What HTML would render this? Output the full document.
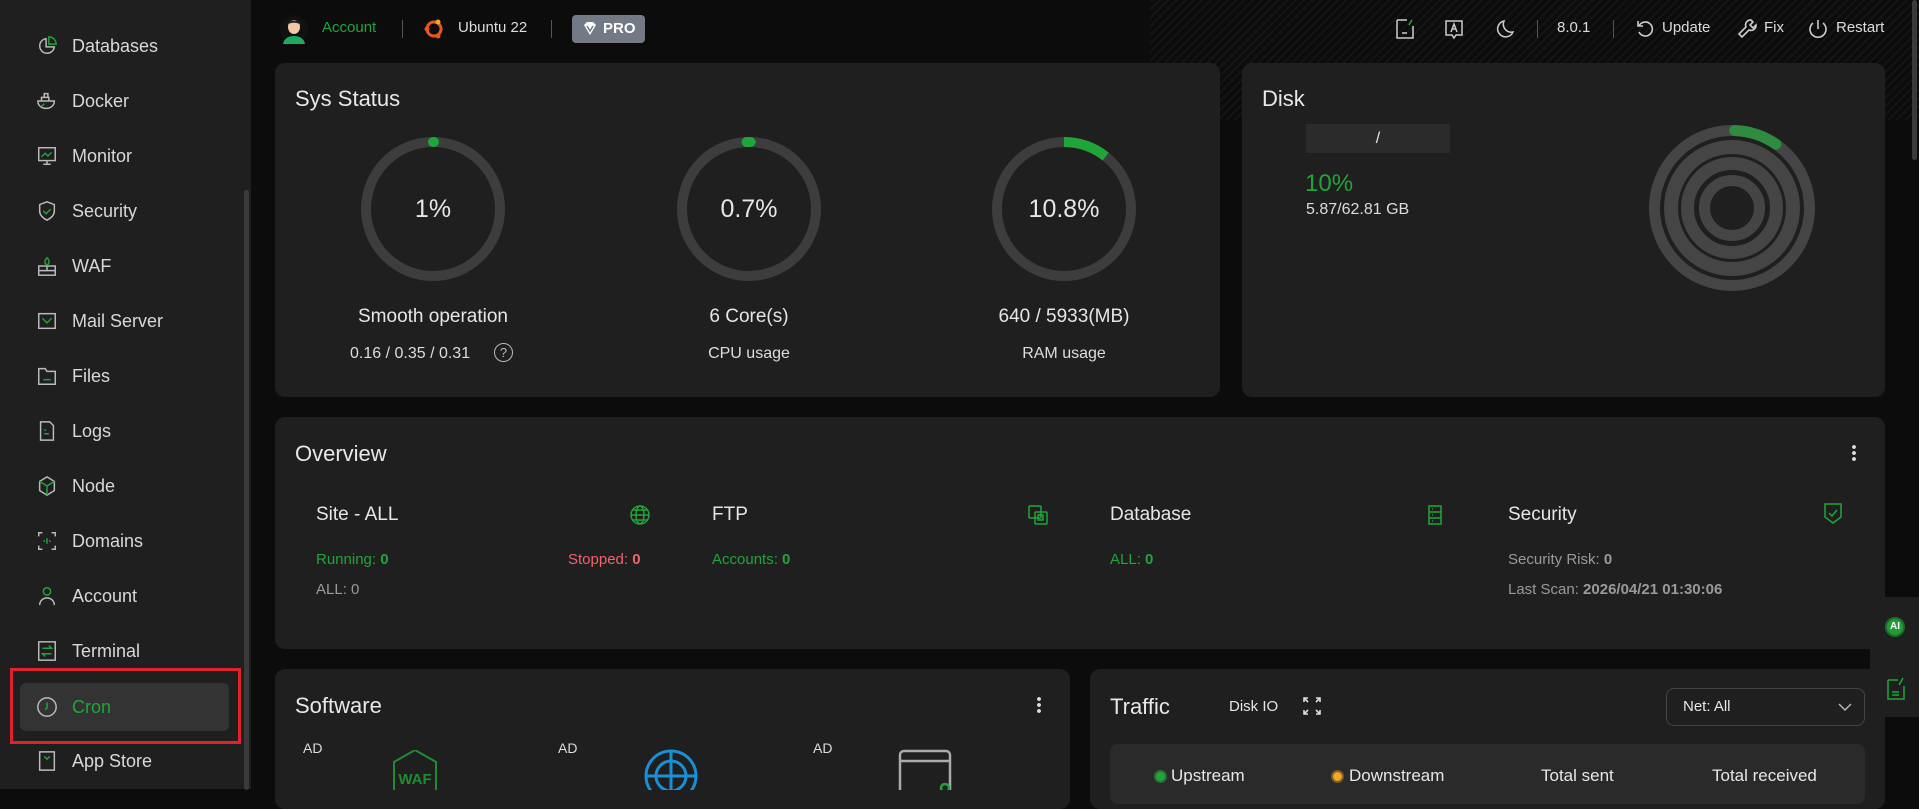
<!DOCTYPE html>
<html><head><meta charset="utf-8"><style>
*{margin:0;padding:0;box-sizing:border-box}
body{width:1919px;height:789px;overflow:hidden;background:#0c0c0c;font-family:"Liberation Sans",sans-serif;color:#e6e6e6;position:relative}
.a{position:absolute}
.side{left:0;top:0;width:251px;height:789px;background:#1f1f1f}
.nav{position:absolute;left:36px;font-size:18px;color:#d8d8d8;display:flex;align-items:center;height:30px}
.nav svg{width:22px;height:22px;margin-right:14px;fill:none;stroke:#bbb;stroke-width:1.6}
.card{position:absolute;background:#1f1f1f;border-radius:10px}
.t{position:absolute;font-size:22px;color:#e8e8e8}
.c{position:absolute;text-align:center}
.hdr{font-size:15px;color:#ddd}
.g{color:#20a53a}
.gr{color:#9a9a9a}
</style></head><body>
<div class="a" style="left:1150px;top:0;width:769px;height:120px;background:repeating-linear-gradient(135deg,rgba(255,255,255,0.035) 0 2px,transparent 2px 6px);"></div>
<div class="a" style="left:1912px;top:0;width:5px;height:160px;background:#3a3a3a;border-radius:3px"></div>

<div class="a side"></div>
<div class="a" style="left:244px;top:190px;width:5px;height:600px;background:#3a3a3a;border-radius:3px"></div>

<div class="nav" style="top:31px"><svg viewBox="0 0 24 24"><path d="M11 4a8 8 0 1 0 9 9h-9z"/><path d="M14 2v8h8a8 8 0 0 0-8-8z" stroke="#20a53a"/></svg>Databases</div>
<div class="nav" style="top:86px"><svg viewBox="0 0 24 24"><path d="M2 12h18c0 5-4 8-9 8s-9-3-9-8zM6 12V8h8v4M9 8V4h4v4"/><path d="M6 18l3-3" stroke="#20a53a"/></svg>Docker</div>
<div class="nav" style="top:141px"><svg viewBox="0 0 24 24"><rect x="3" y="3" width="18" height="14"/><path d="M12 17v4M8 21h8"/><path d="M6 13l4-4 3 3 4-4" stroke="#20a53a"/></svg>Monitor</div>
<div class="nav" style="top:196px"><svg viewBox="0 0 24 24"><path d="M12 2l8 3v7c0 5-4 8-8 10-4-2-8-5-8-10V5z"/><path d="M8 12l3 3 5-5" stroke="#20a53a"/></svg>Security</div>
<div class="nav" style="top:251px"><svg viewBox="0 0 24 24"><rect x="3" y="12" width="18" height="10"/><path d="M3 17h18M12 12v5"/><path d="M12 3c3 3 3 6 0 8-3-2-3-5 0-8z" stroke="#20a53a"/></svg>WAF</div>
<div class="nav" style="top:306px"><svg viewBox="0 0 24 24"><rect x="3" y="4" width="18" height="16"/><path d="M7 9l5 5 5-5" stroke="#20a53a"/></svg>Mail Server</div>
<div class="nav" style="top:361px"><svg viewBox="0 0 24 24"><path d="M3 4h7l2 3h9v14H3z"/><path d="M8 16h8" stroke="#20a53a"/></svg>Files</div>
<div class="nav" style="top:416px"><svg viewBox="0 0 24 24"><path d="M5 2h10l4 4v16H5z"/><path d="M9 11h2M9 15h5" stroke="#20a53a"/></svg>Logs</div>
<div class="nav" style="top:471px"><svg viewBox="0 0 24 24"><path d="M12 2l8 5v10l-8 5-8-5V7z"/><path d="M4 7l8 5 8-5M12 12v10" stroke="#20a53a"/></svg>Node</div>
<div class="nav" style="top:526px"><svg viewBox="0 0 24 24"><path d="M3 7V3h4M17 3h4v4M21 17v4h-4M7 21H3v-4"/><path d="M12 9v6M9 11v2M15 11v2" stroke="#20a53a"/></svg>Domains</div>
<div class="nav" style="top:581px"><svg viewBox="0 0 24 24"><circle cx="12" cy="7" r="4" stroke="#20a53a"/><path d="M4 22c0-5 4-8 8-8s8 3 8 8"/></svg>Account</div>
<div class="nav" style="top:636px"><svg viewBox="0 0 24 24"><rect x="3" y="2" width="18" height="20"/><path d="M7 9h10l-3-3M17 15H7l3 3" stroke="#20a53a"/></svg>Terminal</div>
<div class="a" style="left:20px;top:683px;width:209px;height:48px;background:#333;border-radius:6px"></div>
<div class="a" style="left:10px;top:668px;width:231px;height:76px;border:3px solid #e0222c"></div>
<div class="nav" style="top:692px;color:#20a53a"><svg viewBox="0 0 24 24"><circle cx="12" cy="12" r="10"/><path d="M12 7v6l-2 2" stroke="#20a53a"/></svg>Cron</div>
<div class="nav" style="top:746px"><svg viewBox="0 0 24 24"><path d="M4 2h16v20H4z"/><path d="M9 7l3 3 3-3" stroke="#20a53a"/></svg>App Store</div>

<!-- header -->
<svg class="a" style="left:280px;top:14px" width="28" height="30" viewBox="0 0 28 30"><circle cx="14" cy="15" r="14" fill="#111"/><path d="M3 30c1-6 6-8 11-8s10 2 11 8z" fill="#1fa860"/><ellipse cx="14" cy="13" rx="6" ry="7" fill="#f1c9a5"/><path d="M7 11c0-6 14-6 14 0-3-3-11-3-14 0z" fill="#222"/></svg>
<div class="a hdr" style="left:322px;top:19px;color:#20a53a">Account</div>
<div class="a" style="left:402px;top:20px;width:1px;height:18px;background:#555"></div>
<svg class="a" style="left:423px;top:18px" width="22" height="22" viewBox="0 0 22 22"><circle cx="11" cy="11" r="7" fill="none" stroke="#e95420" stroke-width="3"/><circle cx="4" cy="11" r="2.5" fill="#e95420"/><circle cx="15" cy="4" r="2.5" fill="#f5a623"/><circle cx="15" cy="18" r="2.5" fill="#e95420"/></svg>
<div class="a hdr" style="left:458px;top:19px">Ubuntu 22</div>
<div class="a" style="left:551px;top:20px;width:1px;height:18px;background:#555"></div>
<div class="a" style="left:572px;top:15px;width:73px;height:28px;background:#737a86;border-radius:4px;font-size:15px;font-weight:bold;color:#fff;line-height:28px;padding-left:31px">PRO</div>
<svg class="a" style="left:582px;top:21px" width="16" height="16" viewBox="0 0 16 16"><path d="M2 4l3-3h6l3 3-6 10z" fill="#fff"/><path d="M5 5l3 5 3-5" stroke="#737a86" stroke-width="1.5" fill="none"/></svg>

<svg class="a" style="left:1394px;top:18px" width="22" height="22" viewBox="0 0 22 22" fill="none" stroke="#ccc" stroke-width="1.5"><path d="M3 2h10M3 2v18h16V8"/><path d="M8 15h5"/><path d="M18 2l-3 5" stroke="#20a53a"/></svg>
<svg class="a" style="left:1443px;top:18px" width="22" height="22" viewBox="0 0 22 22" fill="none" stroke="#ccc" stroke-width="1.5"><path d="M3 3h16v14h-6l-2 3-2-3H3z"/><path d="M8 14l3-8 3 8M9 11h4"/></svg>
<svg class="a" style="left:1494px;top:18px" width="22" height="22" viewBox="0 0 22 22" fill="none" stroke="#ccc" stroke-width="1.5"><path d="M10 3a8 8 0 1 0 9 11A8 8 0 0 1 10 3z"/></svg>
<div class="a" style="left:1537px;top:20px;width:1px;height:18px;background:#555"></div>
<div class="a hdr" style="left:1557px;top:19px">8.0.1</div>
<div class="a" style="left:1613px;top:20px;width:1px;height:18px;background:#555"></div>
<svg class="a" style="left:1634px;top:18px" width="22" height="22" viewBox="0 0 22 22" fill="none" stroke="#ccc" stroke-width="1.6"><path d="M5 8a7 7 0 1 1 0 6"/><path d="M4 3v5h5"/></svg>
<div class="a hdr" style="left:1662px;top:19px">Update</div>
<svg class="a" style="left:1737px;top:18px" width="22" height="22" viewBox="0 0 22 22" fill="none" stroke="#ccc" stroke-width="1.6"><path d="M14 2a5 5 0 0 0-5 7L2 16l3 3 7-7a5 5 0 0 0 7-5l-3 3-3-3 3-3z"/></svg>
<div class="a hdr" style="left:1764px;top:19px">Fix</div>
<svg class="a" style="left:1807px;top:18px" width="22" height="22" viewBox="0 0 22 22" fill="none" stroke="#ccc" stroke-width="1.6"><path d="M11 2v9"/><path d="M6 5a8 8 0 1 0 10 0"/></svg>
<div class="a hdr" style="left:1836px;top:19px">Restart</div>

<!-- Sys status -->
<div class="card" style="left:275px;top:63px;width:945px;height:334px"></div>
<div class="t" style="left:295px;top:86px">Sys Status</div>
<svg class="a" style="left:275px;top:63px" width="945" height="334">
<g fill="none" stroke-width="10">
<circle cx="158" cy="146" r="67" stroke="#3d3d3d"/>
<circle cx="158" cy="146" r="67" stroke="#20a53a" stroke-linecap="round" stroke-dasharray="1 500" transform="rotate(-90 158 146)"/>
<circle cx="474" cy="146" r="67" stroke="#3d3d3d"/>
<circle cx="474" cy="146" r="67" stroke="#20a53a" stroke-linecap="round" stroke-dasharray="4 500" transform="rotate(-92 474 146)"/>
<circle cx="789" cy="146" r="67" stroke="#3d3d3d"/>
<circle cx="789" cy="146" r="67" stroke="#20a53a" stroke-dasharray="45 500" transform="rotate(-90 789 146)"/>
</g></svg>
<div class="c" style="left:333px;top:195px;width:200px;font-size:25px">1%</div>
<div class="c" style="left:649px;top:195px;width:200px;font-size:25px">0.7%</div>
<div class="c" style="left:964px;top:195px;width:200px;font-size:25px">10.8%</div>
<div class="c" style="left:283px;top:306px;width:300px;font-size:19px">Smooth operation</div>
<div class="c" style="left:599px;top:306px;width:300px;font-size:19px">6 Core(s)</div>
<div class="c" style="left:914px;top:306px;width:300px;font-size:19px">640 / 5933(MB)</div>
<div class="a" style="left:350px;top:345px;font-size:16px;color:#ddd">0.16 / 0.35 / 0.31</div>
<div class="a" style="left:494px;top:343px;width:19px;height:19px;border:1.4px solid #bbb;border-radius:50%;font-size:13px;text-align:center;line-height:17px;color:#bbb">?</div>
<div class="c" style="left:599px;top:345px;width:300px;font-size:16px;color:#ddd">CPU usage</div>
<div class="c" style="left:914px;top:345px;width:300px;font-size:16px;color:#ddd">RAM usage</div>

<!-- Disk -->
<div class="card" style="left:1242px;top:63px;width:643px;height:334px"></div>
<div class="t" style="left:1262px;top:86px">Disk</div>
<div class="a" style="left:1306px;top:124px;width:144px;height:29px;background:#2b2b2b;text-align:center;font-size:16px;line-height:29px">/</div>
<div class="a" style="left:1305px;top:170px;font-size:24px;color:#20a53a">10%</div>
<div class="a" style="left:1306px;top:201px;font-size:16px;color:#ddd">5.87/62.81 GB</div>
<svg class="a" style="left:1632px;top:108px" width="200" height="200"><g fill="none" stroke="#454545">
<circle cx="100" cy="100" r="77.5" stroke-width="11"/><circle cx="100" cy="100" r="61" stroke-width="14"/><circle cx="100" cy="100" r="44.5" stroke-width="13"/><circle cx="100" cy="100" r="27.5" stroke-width="11"/></g>
<circle cx="100" cy="100" r="77.5" fill="none" stroke="#2e8b3f" stroke-width="11" stroke-linecap="round" stroke-dasharray="44 500" transform="rotate(-88 100 100)"/></svg>

<!-- Overview -->
<div class="card" style="left:275px;top:417px;width:1610px;height:232px"></div>
<div class="t" style="left:295px;top:441px">Overview</div>
<div class="a" style="left:1852px;top:444px;width:4px;height:18px;background:radial-gradient(circle,#ddd 1.8px,transparent 2px) 0 0/4px 6px"></div>
<div class="a" style="left:316px;top:504px;font-size:19px">Site - ALL</div>
<div class="a" style="left:712px;top:504px;font-size:19px">FTP</div>
<div class="a" style="left:1110px;top:504px;font-size:19px">Database</div>
<div class="a" style="left:1508px;top:504px;font-size:19px">Security</div>
<svg class="a" style="left:629px;top:504px" width="22" height="22" viewBox="0 0 22 22" fill="none" stroke="#20a53a" stroke-width="1.5"><circle cx="11" cy="11" r="9"/><ellipse cx="11" cy="11" rx="4" ry="9"/><path d="M2 11h18M4 6h14M4 16h14"/></svg>
<svg class="a" style="left:1027px;top:504px" width="22" height="22" viewBox="0 0 22 22" fill="none" stroke="#20a53a" stroke-width="1.5"><rect x="2" y="2" width="12" height="12" rx="1"/><rect x="8" y="8" width="12" height="12" rx="1"/><rect x="11" y="11" width="5" height="5"/></svg>
<svg class="a" style="left:1424px;top:504px" width="22" height="22" viewBox="0 0 22 22" fill="none" stroke="#20a53a" stroke-width="1.5"><rect x="5" y="2" width="12" height="18"/><path d="M5 8h12M5 14h12M8 5h1M8 11h1M8 17h1"/></svg>
<svg class="a" style="left:1822px;top:502px" width="22" height="24" viewBox="0 0 22 24" fill="none" stroke="#20a53a" stroke-width="1.5"><path d="M3 2h16v13l-8 6-8-6z"/><path d="M7 11l3 3 5-6"/></svg>
<div class="a g" style="left:316px;top:551px;font-size:15px">Running: <b>0</b></div>
<div class="a" style="left:568px;top:551px;font-size:15px;color:#f0636b">Stopped: <b>0</b></div>
<div class="a g" style="left:712px;top:551px;font-size:15px">Accounts: <b>0</b></div>
<div class="a g" style="left:1110px;top:551px;font-size:15px">ALL: <b>0</b></div>
<div class="a gr" style="left:1508px;top:551px;font-size:15px">Security Risk: <b>0</b></div>
<div class="a gr" style="left:316px;top:581px;font-size:15px">ALL: 0</div>
<div class="a gr" style="left:1508px;top:581px;font-size:15px">Last Scan: <b>2026/04/21 01:30:06</b></div>

<!-- Software -->
<div class="card" style="left:275px;top:669px;width:795px;height:140px"></div>
<div class="t" style="left:295px;top:693px">Software</div>
<div class="a" style="left:1037px;top:696px;width:4px;height:18px;background:radial-gradient(circle,#ddd 1.8px,transparent 2px) 0 0/4px 6px"></div>
<div class="a" style="left:303px;top:740px;font-size:14px;color:#ddd">AD</div>
<div class="a" style="left:558px;top:740px;font-size:14px;color:#ddd">AD</div>
<div class="a" style="left:813px;top:740px;font-size:14px;color:#ddd">AD</div>
<svg class="a" style="left:390px;top:750px" width="50" height="40" viewBox="0 0 50 40"><path d="M4 40V12L25 0l21 12v28" fill="none" stroke="#1f8c34" stroke-width="2"/><text x="25" y="34" text-anchor="middle" font-family="Liberation Sans" font-size="15" font-weight="bold" fill="#1f8c34">WAF</text></svg>
<svg class="a" style="left:643px;top:748px" width="56" height="42" viewBox="0 0 56 42" fill="none" stroke="#1b8fd4" stroke-width="3"><circle cx="28" cy="28" r="25"/><circle cx="28" cy="28" r="15"/><path d="M3 28h50M28 3v50"/></svg>
<svg class="a" style="left:897px;top:748px" width="56" height="42" viewBox="0 0 56 42" fill="none" stroke="#aaa" stroke-width="2.5"><rect x="3" y="3" width="50" height="45" rx="4"/><path d="M3 13h50"/><circle cx="48" cy="40" r="4" stroke="#20a53a"/></svg>

<!-- Traffic -->
<div class="card" style="left:1090px;top:669px;width:795px;height:140px"></div>
<div class="t" style="left:1110px;top:694px">Traffic</div>
<div class="a" style="left:1229px;top:698px;font-size:15px">Disk IO</div>
<svg class="a" style="left:1303px;top:697px" width="18" height="18" viewBox="0 0 18 18" fill="none" stroke="#ddd" stroke-width="1.6"><path d="M1 5V1h4M13 1h4v4M17 13v4h-4M5 17H1v-4M1 1l4 4M17 1l-4 4M17 17l-4-4M1 17l4-4"/></svg>
<div class="a" style="left:1666px;top:688px;width:199px;height:38px;border:1px solid #444;border-radius:8px;font-size:15px;line-height:36px;padding-left:16px">Net: All</div>
<svg class="a" style="left:1838px;top:702px" width="14" height="10" viewBox="0 0 14 10" fill="none" stroke="#bbb" stroke-width="1.4"><path d="M1 2l6 6 6-6"/></svg>
<div class="a" style="left:1110px;top:744px;width:755px;height:60px;background:#2a2a2a;border-radius:8px"></div>
<div class="a" style="left:1154px;top:770px;width:13px;height:13px;border-radius:50%;background:#20a53a;border:2px solid #2d6e38"></div>
<div class="a" style="left:1171px;top:766px;font-size:17px">Upstream</div>
<div class="a" style="left:1331px;top:770px;width:13px;height:13px;border-radius:50%;background:#f5a623;border:2px solid #7a5a25"></div>
<div class="a" style="left:1349px;top:766px;font-size:17px">Downstream</div>
<div class="a" style="left:1541px;top:766px;font-size:17px">Total sent</div>
<div class="a" style="left:1712px;top:766px;font-size:17px">Total received</div>

<!-- right float -->
<div class="a" style="left:1870px;top:597px;width:49px;height:120px;background:#1f1f1f"></div>
<div class="a" style="left:1885px;top:617px;width:20px;height:20px;border-radius:50%;background:#1f9c38;border:2px solid #1b6e2c;font-size:10px;font-weight:bold;text-align:center;line-height:16px;color:#fff">AI</div>
<svg class="a" style="left:1886px;top:677px" width="20" height="24" viewBox="0 0 20 24" fill="none" stroke="#20a53a" stroke-width="1.5"><path d="M2 3h10M2 3v19h16V9"/><path d="M6 15h7M6 18h7"/><path d="M17 1l-4 7"/></svg>
</body></html>
